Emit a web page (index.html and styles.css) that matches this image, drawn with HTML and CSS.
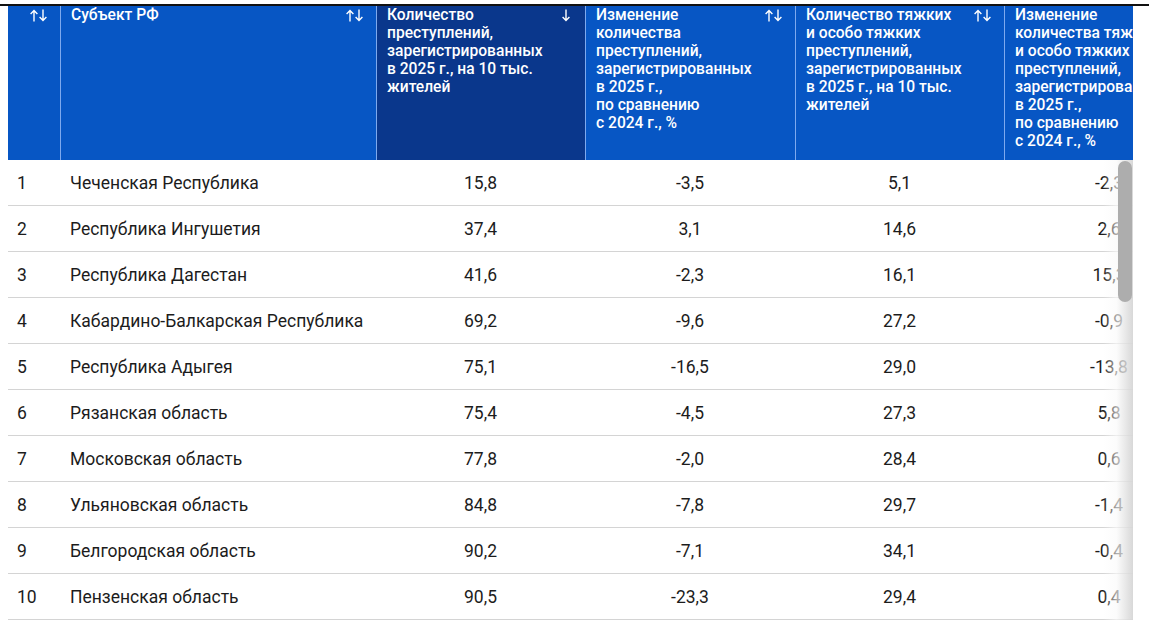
FILE: index.html
```html
<!DOCTYPE html>
<html lang="ru">
<head>
<meta charset="utf-8">
<link rel="stylesheet" href="styles.css">
</head>
<body>
<div class="topline"></div>
<div class="frame">
  <div class="table">
    <div class="head">
      <div class="th th-num"><span class="sort"><svg width="19" height="13" viewBox="0 0 19 13"><path d="M5 12.5V1.5M1.6 5L5 1.5 8.4 5" /><path d="M14 0.5V11.5M10.6 8L14 11.5 17.4 8" /></svg></span></div>
      <div class="th"><span class="label">Субъект РФ</span><span class="sort"><svg width="19" height="13" viewBox="0 0 19 13"><path d="M5 12.5V1.5M1.6 5L5 1.5 8.4 5" /><path d="M14 0.5V11.5M10.6 8L14 11.5 17.4 8" /></svg></span></div>
      <div class="th active"><span class="label">Количество<br>преступлений,<br>зарегистрированных<br>в 2025 г., на 10 тыс.<br>жителей</span><span class="sort"><svg width="19" height="13" viewBox="0 0 19 13"><path d="M12 0.5V11.5M8.6 8L12 11.5 15.4 8" /></svg></span></div>
      <div class="th"><span class="label">Изменение<br>количества<br>преступлений,<br>зарегистрированных<br>в 2025 г.,<br>по сравнению<br>с 2024 г., %</span><span class="sort"><svg width="19" height="13" viewBox="0 0 19 13"><path d="M5 12.5V1.5M1.6 5L5 1.5 8.4 5" /><path d="M14 0.5V11.5M10.6 8L14 11.5 17.4 8" /></svg></span></div>
      <div class="th"><span class="label">Количество тяжких<br>и особо тяжких<br>преступлений,<br>зарегистрированных<br>в 2025 г., на 10 тыс.<br>жителей</span><span class="sort"><svg width="19" height="13" viewBox="0 0 19 13"><path d="M5 12.5V1.5M1.6 5L5 1.5 8.4 5" /><path d="M14 0.5V11.5M10.6 8L14 11.5 17.4 8" /></svg></span></div>
      <div class="th"><span class="label">Изменение<br>количества тяжких<br>и особо тяжких<br>преступлений,<br>зарегистрированных<br>в 2025 г.,<br>по сравнению<br>с 2024 г., %</span></div>
    </div>
    <div class="row"><div class="td num">1</div><div class="td name">Чеченская Республика</div><div class="td val">15,8</div><div class="td val">-3,5</div><div class="td val">5,1</div><div class="td val">-2,3</div></div>
    <div class="row"><div class="td num">2</div><div class="td name">Республика Ингушетия</div><div class="td val">37,4</div><div class="td val">3,1</div><div class="td val">14,6</div><div class="td val">2,6</div></div>
    <div class="row"><div class="td num">3</div><div class="td name">Республика Дагестан</div><div class="td val">41,6</div><div class="td val">-2,3</div><div class="td val">16,1</div><div class="td val">15,3</div></div>
    <div class="row"><div class="td num">4</div><div class="td name">Кабардино-Балкарская Республика</div><div class="td val">69,2</div><div class="td val">-9,6</div><div class="td val">27,2</div><div class="td val">-0,9</div></div>
    <div class="row"><div class="td num">5</div><div class="td name">Республика Адыгея</div><div class="td val">75,1</div><div class="td val">-16,5</div><div class="td val">29,0</div><div class="td val">-13,8</div></div>
    <div class="row"><div class="td num">6</div><div class="td name">Рязанская область</div><div class="td val">75,4</div><div class="td val">-4,5</div><div class="td val">27,3</div><div class="td val">5,8</div></div>
    <div class="row"><div class="td num">7</div><div class="td name">Московская область</div><div class="td val">77,8</div><div class="td val">-2,0</div><div class="td val">28,4</div><div class="td val">0,6</div></div>
    <div class="row"><div class="td num">8</div><div class="td name">Ульяновская область</div><div class="td val">84,8</div><div class="td val">-7,8</div><div class="td val">29,7</div><div class="td val">-1,4</div></div>
    <div class="row"><div class="td num">9</div><div class="td name">Белгородская область</div><div class="td val">90,2</div><div class="td val">-7,1</div><div class="td val">34,1</div><div class="td val">-0,4</div></div>
    <div class="row"><div class="td num">10</div><div class="td name">Пензенская область</div><div class="td val">90,5</div><div class="td val">-23,3</div><div class="td val">29,4</div><div class="td val">0,4</div></div>
  </div>
  <div class="fade"></div>
  <div class="thumb"></div>
</div>
</body>
</html>
```

FILE: styles.css
```css
html, body {
  margin: 0;
  padding: 0;
  background: #ffffff;
}

body {
  font-family: Roboto, "Liberation Sans", Arial, sans-serif;
  color: #1c1c1c;
}

.topline {
  margin-top: 4px;
  height: 2px;
  background: #111111;
}

.frame {
  position: relative;
  margin-left: 8px;
  width: 1125px;
  overflow: hidden;
}

.table {
  width: 1206px;
}

.head,
.row {
  display: grid;
  grid-template-columns: 52px 316px 209px 210px 209px 210px;
}

.head {
  height: 154px;
  background: #0756c4;
}

.th {
  display: flex;
  justify-content: space-between;
  align-items: flex-start;
  padding: 0 12px 0 10px;
  border-left: 1px solid #7ea9ee;
  color: #ffffff;
  font-size: 15.6px;
  font-weight: 500;
  line-height: 18px;
  white-space: nowrap;
}

.th-num {
  border-left: none;
  justify-content: flex-end;
}

.th.active {
  background: #0a378c;
}

.label {
  display: block;
}

.sort {
  display: block;
  flex-shrink: 0;
  margin-top: 3px;
  height: 13px;
}

.sort svg {
  display: block;
  fill: none;
  stroke: #ffffff;
  stroke-width: 1.4;
}

.row {
  height: 45px;
  border-bottom: 1px solid #d4d4d4;
  font-size: 17.5px;
  align-items: center;
}

.td {
  white-space: nowrap;
  padding-top: 1px;
}

.num {
  padding-left: 9px;
}

.name {
  padding-left: 10px;
}

.val {
  text-align: center;
}

.fade {
  position: absolute;
  right: 0;
  top: 154px;
  bottom: 0;
  width: 30px;
  background: linear-gradient(to right, rgba(255,255,255,0) 0%, rgba(250,250,250,0.65) 45%, rgba(214,214,214,0.95) 100%);
}

.thumb {
  position: absolute;
  right: 1px;
  top: 155px;
  width: 14px;
  height: 141px;
  border-radius: 7px;
  background: #adadad;
}
```
